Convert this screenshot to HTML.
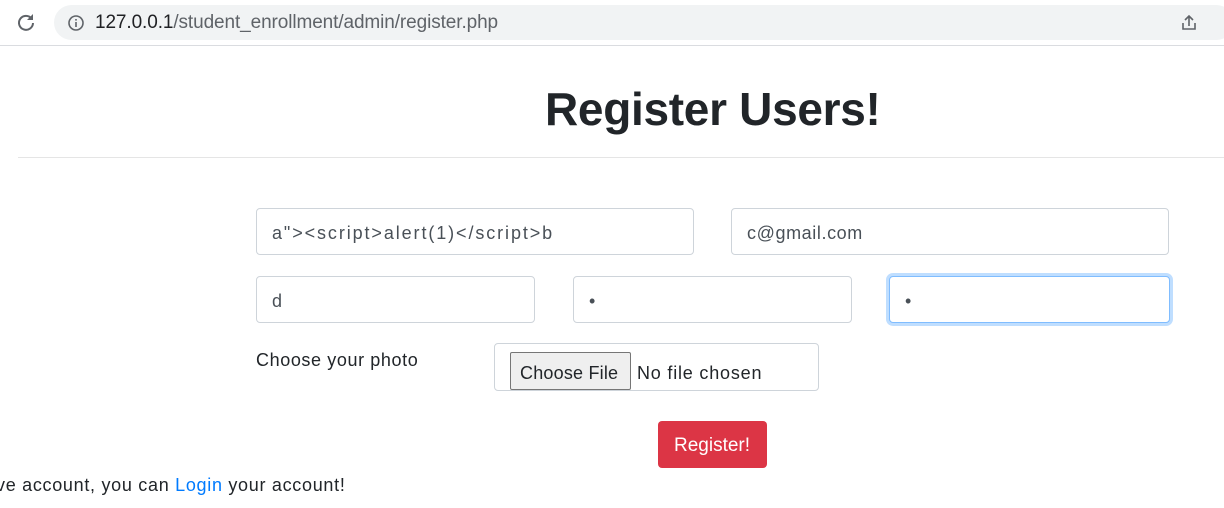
<!DOCTYPE html>
<html><head><style>
*{box-sizing:border-box}
body{margin:0;width:1224px;height:508px;overflow:hidden;background:#fff;font-family:"Liberation Sans",sans-serif;color:#212529;position:relative;letter-spacing:.6px}
.bar{position:absolute;left:0;top:0;width:1224px;height:46px;background:#fff;border-bottom:1px solid #dadce0;letter-spacing:0}
.url{position:absolute;left:54px;top:5px;width:1180px;height:35px;border-radius:18px;background:#f1f3f4}
.abs{position:absolute}
.inp{position:absolute;border:1px solid #ced4da;border-radius:4px;height:47px;font-size:18px;padding:14px 15px 0;color:#495057;background:#fff}
</style></head><body>
<div class="bar">
<svg class="abs" style="left:16px;top:12px" width="20" height="20" viewBox="0 0 20 20"><path d="M15.5 6.5A7 7 0 1 0 17 11" fill="none" stroke="#5f6368" stroke-width="2"/><path d="M17 2v6h-6z" fill="#5f6368"/></svg>
<div class="url"></div>
<svg class="abs" style="left:67px;top:14px" width="18" height="18" viewBox="0 0 18 18"><circle cx="9" cy="9" r="7" fill="none" stroke="#5f6368" stroke-width="1.6"/><rect x="8.2" y="8" width="1.6" height="5" fill="#5f6368"/><rect x="8.2" y="5" width="1.6" height="1.6" fill="#5f6368"/></svg>
<div class="abs" style="left:95px;top:12px;font-size:19px;color:#5f6368;letter-spacing:-.1px"><span style="color:#202124">127.0.0.1</span>/student_enrollment/admin/register.php</div>
<svg class="abs" style="left:1179px;top:13px" width="20" height="20" viewBox="0 0 20 20"><path d="M4 10v6h12v-6M10 13V3M6 7l4-4 4 4" fill="none" stroke="#5f6368" stroke-width="1.6"/></svg>
</div>
<div class="abs" style="left:545px;top:82px;font-size:46px;font-weight:bold;letter-spacing:-.3px">Register Users!</div>
<div class="abs" style="left:18px;top:157px;width:1206px;height:1px;background:#e5e5e5"></div>
<div class="inp" style="left:256px;top:208px;width:438px;letter-spacing:1.9px">a"&gt;&lt;script&gt;alert(1)&lt;/script&gt;b</div>
<div class="inp" style="left:731px;top:208px;width:438px">c@gmail.com</div>
<div class="inp" style="left:256px;top:276px;width:279px">d</div>
<div class="inp" style="left:573px;top:276px;width:279px">•</div>
<div class="inp" style="left:889px;top:276px;width:281px;border-color:#80bdff;box-shadow:0 0 0 3px rgba(0,123,255,.25)">•</div>
<div class="abs" style="left:256px;top:350px;font-size:18px">Choose your photo</div>
<div class="abs" style="left:494px;top:343px;width:325px;height:48px;border:1px solid #ced4da;border-radius:4px"></div>
<div class="abs" style="left:510px;top:352px;width:121px;height:38px;border:1px solid #767676;border-radius:2px;background:#efefef;font-size:18px;padding:10px 0 0 9px;letter-spacing:.2px">Choose File</div>
<div class="abs" style="left:637px;top:363px;font-size:18px;letter-spacing:.8px">No file chosen</div>
<div class="abs" style="left:658px;top:421px;width:109px;height:47px;border-radius:4px;background:#dc3545;color:#fff;font-size:19px;padding:14px 0 0 16px;letter-spacing:0">Register!</div>
<div class="abs" style="left:-4px;top:475px;font-size:18px;letter-spacing:.7px">ve account, you can <span style="color:#007bff">Login</span> your account!</div>
</body></html>
